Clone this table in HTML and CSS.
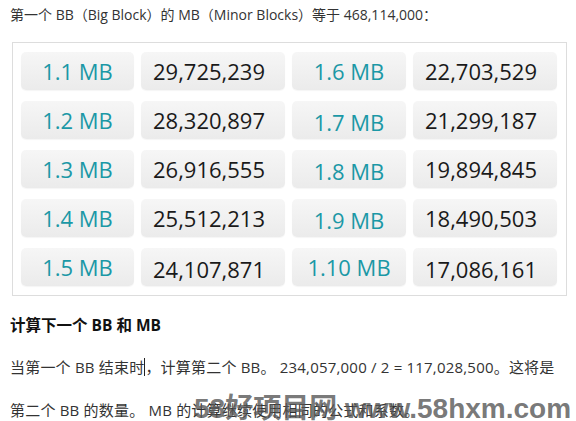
FILE: index.html
```html
<!DOCTYPE html>
<html lang="zh-CN">
<head>
  <meta charset="UTF-8">
  <meta name="viewport" content="width=device-width, initial-scale=1.0">
  <title>BB 和 MB</title>
  <link rel="stylesheet" href="styles.css">
</head>
<body>
  <p class="intro">第一个 BB（Big Block）的 MB（Minor Blocks）等于 468,114,000：</p>

  <!-- MB table -->
  <div class="mb-table">
    <div class="size">1.1 MB</div><div class="count">29,725,239</div>
    <div class="size">1.6 MB</div><div class="count">22,703,529</div>
    <div class="size">1.2 MB</div><div class="count">28,320,897</div>
    <div class="size low">1.7 MB</div><div class="count">21,299,187</div>
    <div class="size">1.3 MB</div><div class="count">26,916,555</div>
    <div class="size low">1.8 MB</div><div class="count">19,894,845</div>
    <div class="size">1.4 MB</div><div class="count">25,512,213</div>
    <div class="size low">1.9 MB</div><div class="count">18,490,503</div>
    <div class="size">1.5 MB</div><div class="count low">24,107,871</div>
    <div class="size">1.10 MB</div><div class="count low">17,086,161</div>
  </div>

  <h4 class="subhead">计算下一个 BB 和 MB</h4>
  <p class="para">当第一个 BB 结束时<span class="caret"></span>，计算第二个 BB。 234,057,000 / 2 = 117,028,500。这将是第二个 BB 的数量。 MB 的计算继续使用相同的公式和系数。</p>

  <div class="watermark">58好项目网 www.58hxm.com</div>
</body>
</html>
```

FILE: styles.css
```css
body {
  margin: 0;
  padding: 0 10px;
  background-color: #ffffff;
  font-family: "Open Sans", "Noto Sans CJK SC", sans-serif;
  color: #333333;
  overflow: hidden;
  height: 421px;
  position: relative;
}

.intro {
  margin: 0;
  padding-top: 4px;
  font-size: 14px;
  line-height: 22px;
}

.mb-table {
  margin: 16px 0 0 2px;
  width: 555px;
  box-sizing: border-box;
  padding: 9px 8px;
  border: 1px solid #dddddd;
  display: grid;
  grid-template-columns: 113px 144px 114px 144px;
  grid-auto-rows: 38px;
  column-gap: 7px;
  row-gap: 11px;
}

.mb-table div {
  background: linear-gradient(#f6f6f6, #ebebeb);
  border-radius: 5px;
  box-shadow: 0 1px 1px rgba(0, 0, 0, 0.04);
  font-size: 22px;
  line-height: 38px;
}

.mb-table .size {
  color: #1b98a6;
  text-align: center;
}

.mb-table .count {
  color: #1a1a1a;
  padding-left: 12px;
}

.mb-table .low {
  line-height: 42px;
}

.subhead {
  margin: 18px 0 0;
  font-size: 15.5px;
  line-height: 22px;
  font-weight: bold;
  color: #111111;
}

.para {
  margin: 10px 0 0;
  font-size: 15px;
  line-height: 43px;
  letter-spacing: 0.2px;
}

.caret {
  display: inline-block;
  width: 1px;
  height: 18px;
  background-color: #222222;
  vertical-align: -3px;
}

.watermark {
  position: absolute;
  left: 194px;
  top: 393px;
  font-family: "Liberation Sans", "Noto Sans CJK SC", sans-serif;
  font-size: 28px;
  font-weight: bold;
  line-height: 32px;
  white-space: nowrap;
  color: rgba(85, 85, 85, 0.8);
}
```
